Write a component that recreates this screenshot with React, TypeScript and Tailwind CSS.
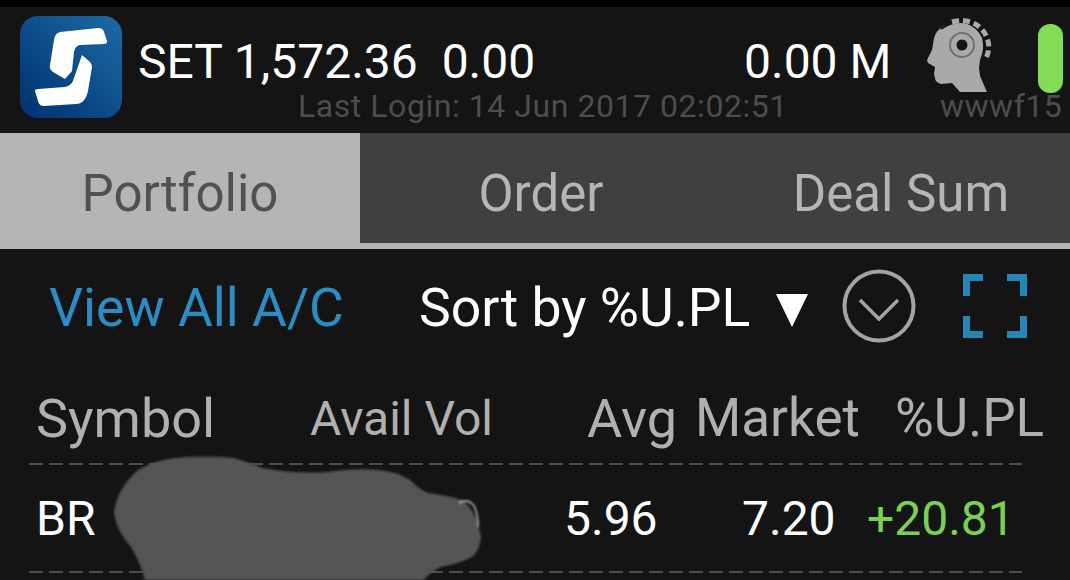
const columns = [
  { label: "Symbol", width: "w-[274px]", size: "text-[54px]" },
  { label: "Avail Vol", width: "w-[277px]", size: "text-[48px]" },
  { label: "Avg", width: "w-[108px]", size: "text-[54px]" },
  { label: "Market", width: "w-[200px]", size: "text-[53px]" },
  { label: "%U.PL", width: "w-auto", size: "text-[53px]" },
];

function Logo() {
  return (
    <div className="flex h-[102px] w-[102px] shrink-0 items-center justify-center rounded-[18px] bg-gradient-to-bl from-[#1e6ba6] to-[#02306f]">
      <svg width="102" height="102" viewBox="0 0 102 102" fill="#fff">
        <path d="M40 16 L78 12 Q83 12 84 16 L87 25 Q87 28 84 28 L60 29 Q55 30 54 36 L52 55 L45 63 L33 56 Q29 53 30 49 L34 24 Q35 17 40 16 Z" />
        <path d="M62 39 L70 46 Q72 48 72 51 L68 75 Q65 88 56 88 L24 90 Q19 90 18 85 L15 75 Q15 73 18 73 L45 71 Q52 70 54 62 Z" />
      </svg>
    </div>
  );
}

function HeadIcon() {
  return (
    <svg width="68" height="76" viewBox="0 0 68 76" className="shrink-0">
      <path fill="#a9a9a9" d="M7 20 Q9 12 17 8 Q28 3 38 5 Q50 9 55 20 Q58 30 53 42 L52 50 L53 58 L60 74 L33 74 L25 65 L14 66 Q8 64 8 60 L7 56 L8 49 L1 45 L0 42 L5 32 Z" />
      <circle cx="35" cy="27" r="12" fill="none" stroke="#717171" strokeWidth="2" />
      <circle cx="35" cy="27" r="5.5" fill="#141414" />
      <path fill="none" stroke="#141414" strokeWidth="2" d="M14 11 Q32 -2 50 9 Q65 23 54 46" />
      <path fill="none" stroke="#a9a9a9" strokeWidth="5" strokeDasharray="7 4" d="M25 4 Q46 -1 57 14 Q66 28 58 42" />
    </svg>
  );
}

function Blob() {
  return (
    <div className="absolute left-[110px] top-[453px] blur-[1px]">
      <svg width="376" height="127" viewBox="110 453 376 127" fill="#555555">
        <path d="M186 457 Q216 456 234 458 Q248 462 262 468 Q295 474 328 472 Q356 468 379 470 Q398 472 410 480 Q420 490 428 493 Q450 496 462 500 Q476 510 481 537 Q480 550 472 557 Q458 564 441 567 Q430 572 424 580 L145 580 Q140 562 131 547 Q116 530 114 513 Q116 490 138 470 Q156 459 186 457 Z" />
        <path d="M459 503 Q468 498 474 506 Q478 514 478 527" fill="none" stroke="#c8c8c8" strokeWidth="1.5" />
      </svg>
    </div>
  );
}

function DashedLine() {
  return <div className="mx-[29px] h-[2px] w-[993px] bg-[repeating-linear-gradient(90deg,#4d4d4d_0,#4d4d4d_14px,transparent_14px,transparent_20px)]" />;
}

export default function App() {
  return (
    <div className="relative flex h-[580px] w-[1070px] flex-col overflow-hidden bg-[#141414] font-['Roboto',sans-serif]">
      <div className="h-[7px] bg-black" />

      {/* header */}
      <div className="flex h-[126px] pl-[20px] pt-[9px]">
        <Logo />
        <div className="ml-[16px] w-[778px] shrink-0">
          <div className="mt-[23px] flex h-[46px] items-center text-[48px] leading-none text-white">
            <span className="w-[606px] whitespace-pre">SET 1,572.36  0.00</span>
            <span className="whitespace-pre">0.00 M</span>
          </div>
          <div className="ml-[160px] mt-[3px] whitespace-nowrap text-[32px] leading-[36px] tracking-[0.55px] text-[#4d4d4d]">Last Login: 14 Jun 2017 02:02:51</div>
        </div>
        <div className="flex w-[154px] shrink-0 flex-col">
          <div className="flex items-start">
            <div className="ml-[11px] mt-[2px]">
              <HeadIcon />
            </div>
            <div className="ml-[43px] mt-[8px] h-[69px] w-[25px] shrink-0 rounded-[12px] bg-[#82dc55]" />
          </div>
          <div className="-mt-[6px] ml-[24px] whitespace-nowrap text-[32px] leading-[36px] tracking-[0.5px] text-[#4d4d4d]">wwwf15</div>
        </div>
      </div>

      {/* tabs */}
      <div className="flex h-[116px] border-b-[6px] border-[#b5b5b5] bg-[#404040] text-[51px] leading-none">
        <div className="-mb-[6px] flex w-[360px] shrink-0 items-center justify-center bg-[#b5b5b5] pt-[4px] text-[#515151]">Portfolio</div>
        <div className="flex w-[362px] shrink-0 items-center justify-center pt-[10px] text-[#b5b5b5]">Order</div>
        <div className="flex w-[358px] shrink-0 items-center justify-center pt-[10px] text-[#b5b5b5]">Deal Sum</div>
      </div>

      {/* toolbar */}
      <div className="flex h-[117px] items-center pl-[49px]">
        <span className="w-[370px] text-[53.5px] leading-none text-[#2a8dc5]">View All A/C</span>
        <span className="w-[357px] whitespace-nowrap text-[53.5px] leading-none text-white">Sort by %U.PL</span>
        <svg width="32" height="33" viewBox="0 0 32 33" className="mt-[6px] shrink-0">
          <path d="M0 0 H32 L16 33 Z" fill="#fff" />
        </svg>
        <svg width="74" height="74" viewBox="0 0 74 74" className="mb-[4px] ml-[34px] shrink-0" fill="none" stroke="#a3a3a3">
          <circle cx="37" cy="37" r="34.5" strokeWidth="4" />
          <path d="M18 31 L37 50 L56 31" strokeWidth="3.5" />
        </svg>
        <svg width="64" height="64" viewBox="0 0 64 64" className="mb-[4px] ml-[47px] shrink-0" fill="none" stroke="#2485b8" strokeWidth="7">
          <path d="M3.5 22 V3.5 H20 M44 3.5 H60.5 V22 M3.5 42 V60.5 H20 M44 60.5 H60.5 V42" />
        </svg>
      </div>

      {/* table */}
      <div className="flex h-[97px] items-center pl-[36px] pt-[8px] leading-none text-[#b0b0b0]">
        {columns.map((col) => (
          <span key={col.label} className={`${col.width} ${col.size} shrink-0 whitespace-nowrap`}>{col.label}</span>
        ))}
      </div>
      <DashedLine />
      <div className="flex h-[106px] items-center pl-[36px] pt-[2px] text-[48px] leading-none text-white">
        <span className="w-[528px]">BR</span>
        <span className="w-[178px]">5.96</span>
        <span className="w-[125px]">7.20</span>
        <span className="text-[#79d14f]">+20.81</span>
      </div>
      <DashedLine />

      <Blob />
    </div>
  );
}
